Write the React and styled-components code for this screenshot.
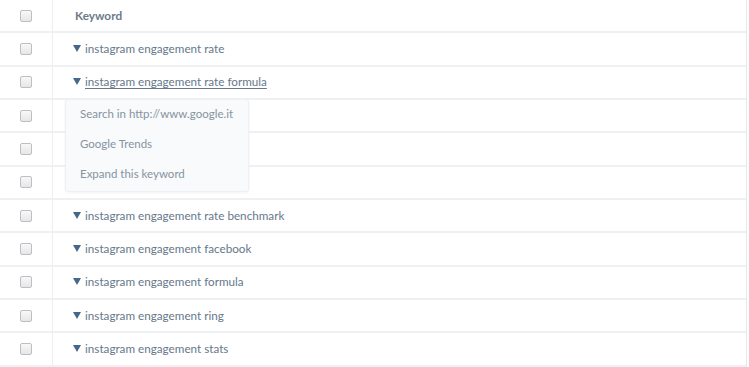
import React from "react";
import styled, { createGlobalStyle } from "styled-components";

const GlobalStyle = createGlobalStyle`
  html, body {
    margin: 0;
    padding: 0;
    background: #fff;
    font-family: Lato, "Open Sans", sans-serif;
  }
`;

// rows 3-5 sit under the open menu, their labels are not visible
const keywords = [
  "instagram engagement rate",
  "instagram engagement rate formula",
  "",
  "",
  "",
  "instagram engagement rate benchmark",
  "instagram engagement facebook",
  "instagram engagement formula",
  "instagram engagement ring",
  "instagram engagement stats",
];

const menuItems = ["Search in http://www.google.it", "Google Trends", "Expand this keyword"];

const Wrapper = styled.div`
  position: relative;
  width: 746px;
  border-right: 1px solid #e6e9ec;
`;

const Row = styled.div`
  display: grid;
  grid-template-columns: 53px 1fr;
  height: 33.33px;
  box-sizing: border-box;
  border-bottom: 2px solid #eef0f2;
`;

const CheckCell = styled.div`
  display: flex;
  align-items: center;
  justify-content: center;
  border-right: 1px solid #eceef0;
`;

const Box = styled.span`
  width: 10px;
  height: 10px;
  border: 1px solid #bcc0c4;
  border-radius: 2px;
  background: linear-gradient(#f8f8f8, #e6e6e6);
`;

const TextCell = styled.div`
  display: flex;
  align-items: center;
  padding-left: ${(p) => (p.$head ? "22px" : "20px")};
  padding-bottom: ${(p) => (p.$head ? "0" : "2px")};
  font-size: ${(p) => (p.$head ? "11.8px" : "11.7px")};
  color: ${(p) => (p.$head ? "#6b7a8b" : "#66788a")};
  font-weight: ${(p) => (p.$head ? 700 : 400)};
  white-space: nowrap;
`;

const Label = styled.span`
  text-decoration: ${(p) => (p.$active ? "underline" : "none")};
  text-underline-offset: 2px;
`;

const Caret = styled.span`
  width: 0;
  height: 0;
  border-left: 4px solid transparent;
  border-right: 4px solid transparent;
  border-top: 7px solid #44688a;
  margin-right: 4px;
  margin-top: 1px;
`;

const Menu = styled.div`
  position: absolute;
  left: 65px;
  top: 99px;
  width: 182px;
  padding: 0 0 1px;
  background: #f8fafb;
  border: 1px solid #eef1f3;
  border-radius: 3px;
  box-shadow: 0 1px 3px rgba(0, 0, 0, 0.05);
`;

const MenuItem = styled.div`
  height: 30px;
  display: flex;
  align-items: center;
  padding-left: 14px;
  padding-bottom: 4px;
  box-sizing: border-box;
  font-size: 11.5px;
  color: #8793a0;
`;

export default function App() {
  return (
    <>
      <GlobalStyle />
      <Wrapper>
        <Row>
          <CheckCell>
            <Box />
          </CheckCell>
          <TextCell $head>Keyword</TextCell>
        </Row>
        {keywords.map((k, i) => (
          <Row key={i}>
            <CheckCell>
              <Box />
            </CheckCell>
            <TextCell>
              {k && <Caret />}
              {k && <Label $active={i === 1}>{i === 1 ? " " + k : k}</Label>}
            </TextCell>
          </Row>
        ))}
        <Menu>
          {menuItems.map((m) => (
            <MenuItem key={m}>{m}</MenuItem>
          ))}
        </Menu>
      </Wrapper>
    </>
  );
}
